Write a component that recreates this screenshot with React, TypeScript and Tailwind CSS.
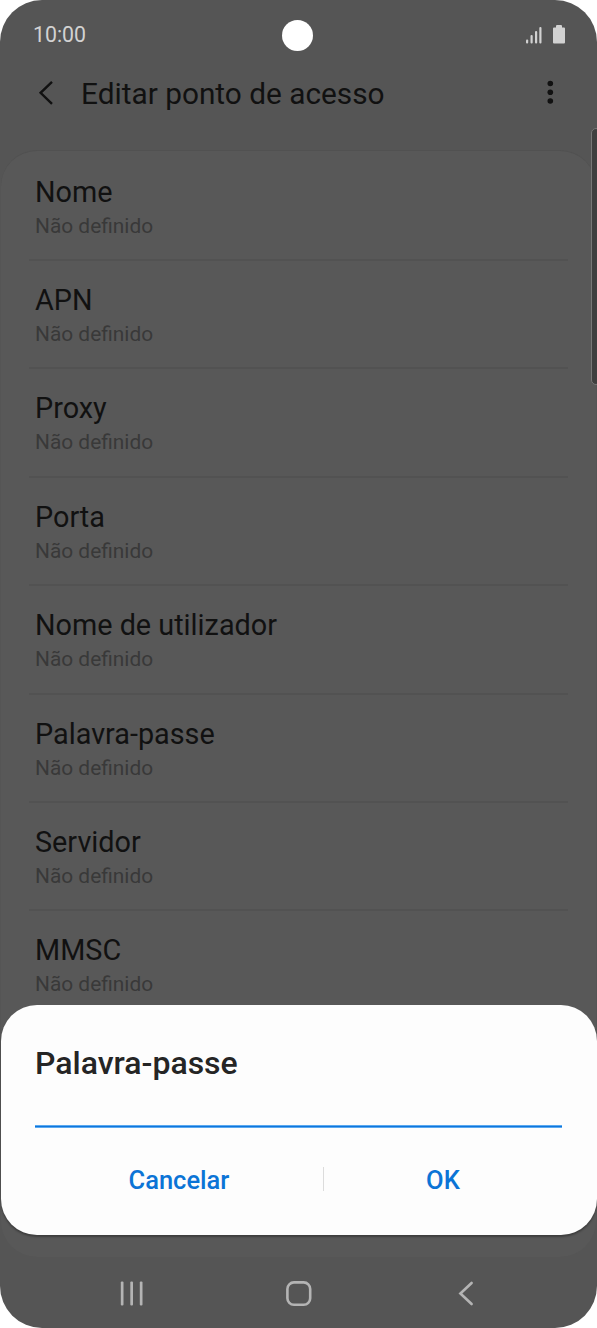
import React from 'react'

const fields = [
  { id: 1, label: 'Nome', value: 'Não definido' },
  { id: 2, label: 'APN', value: 'Não definido' },
  { id: 3, label: 'Proxy', value: 'Não definido' },
  { id: 4, label: 'Porta', value: 'Não definido' },
  { id: 5, label: 'Nome de utilizador', value: 'Não definido' },
  { id: 6, label: 'Palavra-passe', value: 'Não definido' },
  { id: 7, label: 'Servidor', value: 'Não definido' },
  { id: 8, label: 'MMSC', value: 'Não definido' },
]

const StatusBar = () => (
  <div className="relative flex h-[69px] shrink-0 items-center justify-between pl-[33px] pr-[32px] text-[#d2d2d2]">
    <span className="text-[21.3px] leading-[26px]">10:00</span>
    {/* camera cutout */}
    <div className="absolute left-[282px] top-[19.5px] h-[31px] w-[31px] rounded-full bg-white" />
    <div className="flex items-center gap-[11px]">
      <svg width="16" height="18" viewBox="0 0 16 18" fill="currentColor">
        <rect x="0" y="13.5" width="2.2" height="4" rx="1" />
        <rect x="4.5" y="9" width="2.2" height="8.5" rx="1" />
        <rect x="9" y="5" width="2.2" height="12.5" rx="1" />
        <rect x="13.3" y="1" width="2.2" height="16.5" rx="1" />
      </svg>
      <svg width="12" height="19" viewBox="0 0 12 19" fill="currentColor">
        <path d="M3 1.2Q3 0 4 0H8Q9 0 9 1.2V2.5H11Q12 2.5 12 3.5V17.5Q12 18.5 11 18.5H1Q0 18.5 0 17.5V3.5Q0 2.5 1 2.5H3Z" />
      </svg>
    </div>
  </div>
)

const Header = () => (
  <div className="flex h-[81px] shrink-0 items-start pl-[38px] pr-[40px] text-[#111]">
    <svg className="mt-[10.5px]" width="16" height="26" viewBox="0 0 16 26" fill="none" stroke="currentColor" strokeWidth="2.4">
      <path d="M14 1.8L2.6 12.8L14 23.8" />
    </svg>
    <h1 className="ml-[27px] mt-[7px] flex-1 text-[29.8px] leading-[36px]">Editar ponto de acesso</h1>
    <svg className="mt-[11px]" width="10" height="26" viewBox="0 0 10 26" fill="currentColor">
      <circle cx="3.3" cy="3.5" r="2.8" />
      <circle cx="3.3" cy="12.2" r="2.8" />
      <circle cx="3.3" cy="21" r="2.8" />
    </svg>
  </div>
)

const NavBar = () => (
  <div className="flex h-[71px] shrink-0 items-start pl-[120px] pt-[23px] text-[#b4b4b4]">
    <svg width="24" height="26" viewBox="0 0 24 26" fill="currentColor">
      <rect x="0.8" y="1.5" width="2.7" height="24" rx="1" />
      <rect x="10.3" y="1.5" width="2.7" height="24" rx="1" />
      <rect x="19.8" y="1.5" width="2.7" height="24" rx="1" />
    </svg>
    <svg className="ml-[141px]" width="28" height="28" viewBox="0 0 28 28" fill="none" stroke="currentColor" strokeWidth="2.6">
      <rect x="2.4" y="2.4" width="22.8" height="22.4" rx="6.5" />
    </svg>
    <svg className="ml-[145px]" width="17" height="28" viewBox="0 0 17 28" fill="none" stroke="currentColor" strokeWidth="2.6" strokeLinecap="round">
      <path d="M13.6 3L2.4 13.5L13.6 24" />
    </svg>
  </div>
)

const PasswordDialog = () => (
  <div className="absolute left-[0.5px] right-[0.5px] top-[1005px] flex h-[230px] flex-col rounded-[36px] bg-[#fdfdfd] px-[34.5px] shadow-[0_2px_2px_rgba(0,0,0,0.3)]">
    <h2 className="mt-[39px] text-[32px] font-medium leading-[38px] text-[#252525]">Palavra-passe</h2>
    <div className="mt-[43px] h-[3px] w-[527px] border-y border-[#5aa9f0] bg-[#0f76dc]" />
    <div className="mt-[28px] flex items-center text-[25.5px] font-medium leading-[48px] text-[#0b74d6]">
      <button className="w-[289px] text-center">Cancelar</button>
      <div className="mb-[2px] h-[24px] w-px bg-[#dcdcdc]" />
      <button className="w-[239px] text-center">OK</button>
    </div>
  </div>
)

const App = () => {
  return (
    <div className="h-[1328px] w-[597px] bg-white font-['Roboto',sans-serif]">
      <div className="relative flex h-full flex-col overflow-hidden rounded-[42px] bg-[#555]">
        <StatusBar />
        <Header />
        <div className="mx-px h-[1107px] shrink-0 overflow-hidden rounded-[36px] border-t border-[#515151] bg-[#585858] px-[28px] pt-[1.7px]">
          {fields.map((field) => (
            <div key={field.id} className="h-[108.4px] border-b-2 border-[#525252] pl-[6px] pt-[21px]">
              <p className="text-[28.8px] leading-[36px] text-[#111]">{field.label}</p>
              <p className="mt-[2px] text-[20.9px] leading-[28px] text-[#393939]">{field.value}</p>
            </div>
          ))}
        </div>
        <NavBar />
        {/* edge panel handle */}
        <div className="absolute -right-[4px] top-[128px] h-[257px] w-[10px] rounded-[5px] border border-[#777] bg-[#3f3f3f]" />
        <PasswordDialog />
      </div>
    </div>
  )
}

export default App
